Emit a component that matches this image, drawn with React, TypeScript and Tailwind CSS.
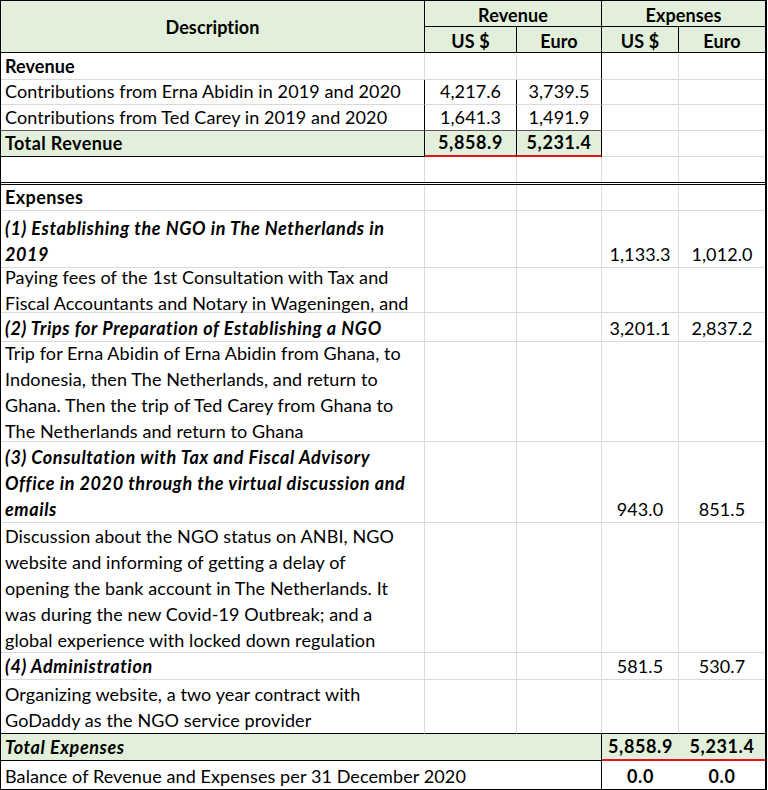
import type { ReactNode } from "react";

interface CellProps {
    className?: string
    children?: ReactNode
}

// one spreadsheet cell; width, borders and background come in through className
const Cell = ({ className = "", children }: CellProps) => {
    return (
        <div className={ `flex h-full shrink-0 ${ className }` }>
            { children }
        </div>
    )
}

const Lines = ({ lines }: { lines: string[] }) => (
    <span>
        { lines.map((line, i) => (
            <span key={ i } className="block">{ line }</span>
        )) }
    </span>
)

// column widths (include the cell's right border)
const C1 = "w-[424px]"
const C2 = "w-[92px]"
const C3 = "w-[85px]"
const C4 = "w-[77px]"
const C5 = "w-[86px]"

const txt = "items-end pl-[4px] whitespace-nowrap"
const num = "items-end justify-center whitespace-nowrap"
const gridR = "border-r border-r-[#dadada]"
const gridB = "border-b border-b-[#dadada]"
const darkR = "border-r border-r-black"
const darkB = "border-b border-b-black"
const redB = "border-b-2 border-b-[#e8141c]"
const green = "bg-[#e2efda]"
const boldNum = "font-bold tracking-[0.6px]"

interface ExpenseRowProps {
    h: string
    lines: string[]
    heading?: boolean
    usd?: string
    eur?: string
}

const ExpenseRow = ({ h, lines, heading, usd, eur }: ExpenseRowProps) => (
    <div className={ `flex ${ h }` }>
        <Cell className={ `${ C1 } pl-[4px] whitespace-nowrap ${ heading ? "items-end font-bold italic tracking-[0.6px]" : "items-center" } ${ gridR } ${ gridB }` }>
            <Lines lines={ lines }/>
        </Cell>
        <Cell className={ `${ C2 } ${ gridR } ${ gridB }` }/>
        <Cell className={ `${ C3 } ${ gridR } ${ gridB }` }/>
        <Cell className={ `${ C4 } ${ num } ${ gridR } ${ gridB }` }>{ usd }</Cell>
        <Cell className={ `${ C5 } ${ num } ${ gridB }` }>{ eur }</Cell>
    </div>
)

export default function App() {
    return (
        <div className="min-h-screen bg-white">
            <div className="w-fit border-t border-l border-r-2 border-b-2 border-black text-[18px] leading-[26px] tracking-[0.1px] text-black [font-family:Lato,sans-serif]">
                {/* header */ }
                <div className="flex h-[52px] font-bold">
                    <Cell className={ `${ C1 } ${ green } ${ darkR } ${ darkB } items-center justify-center` }>
                        Description
                    </Cell>
                    <div className="flex flex-col">
                        <div className="flex h-[26px]">
                            <Cell className={ `w-[177px] ${ green } ${ darkR } ${ darkB } justify-center items-center pt-[3px]` }>Revenue</Cell>
                            <Cell className={ `w-[163px] ${ green } ${ darkB } justify-center items-center pt-[3px]` }>Expenses</Cell>
                        </div>
                        <div className="flex h-[26px]">
                            <Cell className={ `${ C2 } ${ green } ${ darkR } ${ darkB } justify-center items-center pt-[2px]` }>US $</Cell>
                            <Cell className={ `${ C3 } ${ green } ${ darkR } ${ darkB } justify-center items-center pt-[2px]` }>Euro</Cell>
                            <Cell className={ `${ C4 } ${ green } ${ darkR } ${ darkB } justify-center items-center pt-[2px]` }>US $</Cell>
                            <Cell className={ `${ C5 } ${ green } ${ darkB } justify-center items-center pt-[2px]` }>Euro</Cell>
                        </div>
                    </div>
                </div>

                {/* revenue */ }
                <div className="flex h-[27px]">
                    <Cell className={ `${ C1 } ${ txt } ${ gridR } ${ gridB } font-bold` }>Revenue</Cell>
                    <Cell className={ `${ C2 } ${ gridR } ${ gridB }` }/>
                    <Cell className={ `${ C3 } ${ darkR } ${ gridB }` }/>
                    <Cell className={ `${ C4 } ${ gridR } ${ gridB }` }/>
                    <Cell className={ `${ C5 } ${ gridB }` }/>
                </div>
                <div className="flex h-[25px]">
                    <Cell className={ `${ C1 } ${ txt } ${ darkR } ${ gridB }` }>Contributions from Erna Abidin in 2019 and 2020</Cell>
                    <Cell className={ `${ C2 } ${ num } ${ darkR } ${ gridB }` }>4,217.6</Cell>
                    <Cell className={ `${ C3 } ${ num } ${ darkR } ${ gridB }` }>3,739.5</Cell>
                    <Cell className={ `${ C4 } ${ gridR } ${ gridB }` }/>
                    <Cell className={ `${ C5 } ${ gridB }` }/>
                </div>
                <div className="flex h-[26px]">
                    <Cell className={ `${ C1 } ${ txt } ${ darkR } border-b border-b-[#5a5a5a]` }>Contributions from Ted Carey in 2019 and 2020</Cell>
                    <Cell className={ `${ C2 } ${ num } ${ darkR } border-b border-b-[#5a5a5a]` }>1,641.3</Cell>
                    <Cell className={ `${ C3 } ${ num } ${ darkR } border-b border-b-[#5a5a5a]` }>1,491.9</Cell>
                    <Cell className={ `${ C4 } ${ gridR } ${ gridB }` }/>
                    <Cell className={ `${ C5 } ${ gridB }` }/>
                </div>
                <div className="flex h-[26px] font-bold">
                    <Cell className={ `${ C1 } ${ txt } ${ green } ${ darkR } ${ darkB } tracking-[0.4px]` }>Total Revenue</Cell>
                    <Cell className={ `${ C2 } ${ num } ${ boldNum } ${ green } ${ darkR } ${ redB }` }>5,858.9</Cell>
                    <Cell className={ `${ C3 } ${ num } ${ boldNum } ${ green } ${ darkR } ${ redB }` }>5,231.4</Cell>
                    <Cell className={ `${ C4 } ${ gridR } ${ gridB }` }/>
                    <Cell className={ `${ C5 } ${ gridB }` }/>
                </div>
                <div className="flex h-[28px] border-b-[3px] border-double border-black">
                    <Cell className={ `${ C1 } ${ gridR }` }/>
                    <Cell className={ `${ C2 } ${ gridR }` }/>
                    <Cell className={ `${ C3 } ${ gridR }` }/>
                    <Cell className={ `${ C4 } ${ gridR }` }/>
                    <Cell className={ C5 }/>
                </div>

                {/* expenses */ }
                <div className="flex h-[26px]">
                    <Cell className={ `${ C1 } ${ txt } ${ gridR } ${ gridB } font-bold tracking-[0.4px]` }>Expenses</Cell>
                    <Cell className={ `${ C2 } ${ gridR } ${ gridB }` }/>
                    <Cell className={ `${ C3 } ${ gridR } ${ gridB }` }/>
                    <Cell className={ `${ C4 } ${ gridR } ${ gridB }` }/>
                    <Cell className={ `${ C5 } ${ gridB }` }/>
                </div>
                <ExpenseRow h="h-[57px]" heading usd="1,133.3" eur="1,012.0"
                            lines={ [ "(1) Establishing the NGO in The Netherlands in", "2019" ] }/>
                <ExpenseRow h="h-[45px]"
                            lines={ [ "Paying fees of the 1st Consultation with Tax and", "Fiscal Accountants and Notary in Wageningen, and" ] }/>
                <ExpenseRow h="h-[29px]" heading usd="3,201.1" eur="2,837.2"
                            lines={ [ "(2) Trips for Preparation of Establishing a NGO" ] }/>
                <ExpenseRow h="h-[100px]"
                            lines={ [
                                "Trip for Erna Abidin of Erna Abidin from Ghana, to",
                                "Indonesia, then The Netherlands, and return to",
                                "Ghana. Then the trip of Ted Carey from Ghana to",
                                "The Netherlands and return to Ghana",
                            ] }/>
                <ExpenseRow h="h-[81px]" heading usd="943.0" eur="851.5"
                            lines={ [
                                "(3) Consultation with Tax and Fiscal Advisory",
                                "Office in 2020 through the virtual discussion and",
                                "emails",
                            ] }/>
                <ExpenseRow h="h-[130px]"
                            lines={ [
                                "Discussion about the NGO status on ANBI, NGO",
                                "website and informing of getting a delay of",
                                "opening the bank account in The Netherlands. It",
                                "was during the new Covid-19 Outbreak; and a",
                                "global experience with locked down regulation",
                            ] }/>
                <ExpenseRow h="h-[27px]" heading usd="581.5" eur="530.7"
                            lines={ [ "(4) Administration" ] }/>
                <div className="flex h-[54px]">
                    <Cell className={ `${ C1 } ${ txt } ${ gridR } ${ darkB }` }>
                        <Lines lines={ [ "Organizing website, a two year contract with", "GoDaddy as the NGO service provider" ] }/>
                    </Cell>
                    <Cell className={ `${ C2 } ${ gridR } ${ darkB }` }/>
                    <Cell className={ `${ C3 } ${ gridR } ${ darkB }` }/>
                    <Cell className={ `${ C4 } ${ gridR } ${ darkB }` }/>
                    <Cell className={ `${ C5 } ${ darkB }` }/>
                </div>

                {/* totals */ }
                <div className={ `flex h-[27px] font-bold ${ green }` }>
                    <Cell className={ `w-[601px] ${ txt } italic tracking-[0.6px] ${ darkR } ${ darkB }` }>Total Expenses</Cell>
                    <Cell className={ `${ C4 } ${ num } ${ boldNum } ${ redB }` }>5,858.9</Cell>
                    <Cell className={ `${ C5 } ${ num } ${ boldNum } ${ redB }` }>5,231.4</Cell>
                </div>
                <div className="flex h-[28px]">
                    <Cell className={ `w-[601px] ${ txt } ${ darkR }` }>Balance of Revenue and Expenses per 31 December 2020</Cell>
                    <Cell className={ `${ C4 } ${ num } ${ boldNum }` }>0.0</Cell>
                    <Cell className={ `${ C5 } ${ num } ${ boldNum }` }>0.0</Cell>
                </div>
            </div>
        </div>
    )
}
